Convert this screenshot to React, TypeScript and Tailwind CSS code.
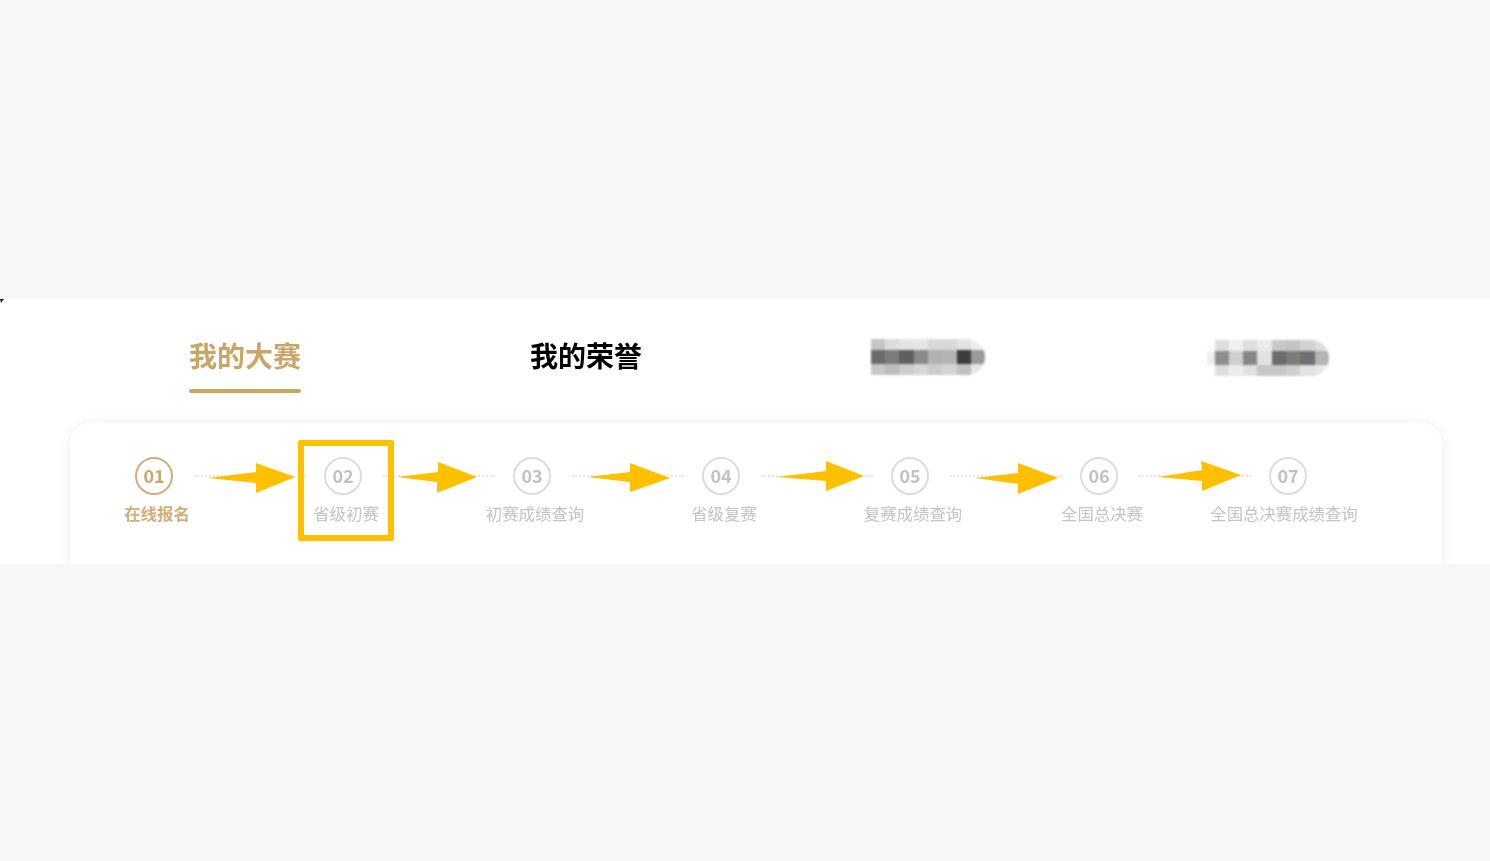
const font = { fontFamily: '"Noto Sans CJK SC", "Noto Sans", sans-serif' };

const tabs = ["我的大赛", "我的荣誉"];

// pixelated (censored) tab titles: top, middle and bottom rows of the mosaic
const mosaicA = [
  ["#c6c6c6", "#dcdcdc", "#e4e4e4", "#e6e6e6", "#d8d8d8", "#d8d8d8", "#e2e2e2", "#eeeeee"],
  ["#6c6c6a", "#7c7c7a", "#5f5f5e", "#8b8b8d", "#b2b2b2", "#b4b4b2", "#3c3c3a", "#9a9a9c"],
  ["#c8c8c8", "#bdbdbd", "#cccccc", "#d6d6d6", "#cbcbcb", "#d4d4d4", "#c0c0c0", "#e6e6e6"],
];
const mosaicB = [
  ["#ffffff", "#dedede", "#f0f0f0", "#dedede", "#ececec", "#c8c8c8", "#c4c4c4", "#d2d2d2", "#dcdcdc"],
  ["#f0f0f0", "#8e8e8e", "#cfcfcf", "#868686", "#e2e2e2", "#6c6c6c", "#7c7c78", "#707072", "#b4b4b6"],
  ["#ffffff", "#dfdfdf", "#ececec", "#e2e2e2", "#c6c6c6", "#c6c6c6", "#cfcfcf", "#e2e2e2", "#e8e8e8"],
];

const steps = [
  { no: "01", label: "在线报名" },
  { no: "02", label: "省级初赛" },
  { no: "03", label: "初赛成绩查询" },
  { no: "04", label: "省级复赛" },
  { no: "05", label: "复赛成绩查询" },
  { no: "06", label: "全国总决赛" },
  { no: "07", label: "全国总决赛成绩查询" },
];

const arrows = [
  "208,478 256,472 256,463 295,477 256,493 256,483",
  "397,477 438,472 438,462 477,477 437,493 437,482",
  "587,477 630,472 630,463 670,478 630,492 630,482",
  "776,477 826,471 826,461 864,476 826,491 826,481",
  "975,478 1018,473 1018,463 1058,478 1018,494 1018,484",
  "1158,477 1202,470 1201,461 1241,475 1202,491 1202,481",
];

function Mosaic({ rows, firstCell, className }: { rows: string[][]; firstCell: number; className: string }) {
  return (
    <div className={`flex flex-col overflow-hidden rounded-r-full blur-[0.8px] ${className}`}>
      {rows.map((row, i) => (
        <div key={i} className={`flex ${i === 1 ? "h-[14px]" : "h-[11px]"}`}>
          {row.map((color, j) => (
            <div
              key={j}
              className="h-full"
              style={{ backgroundColor: color, width: j === 0 ? firstCell : 14.3 }}
            />
          ))}
        </div>
      ))}
    </div>
  );
}

export default function App() {
  return (
    <div className="relative h-[861px] overflow-hidden bg-[#f7f7f7] pt-[299px]" style={font}>
      <div className="h-[265px] overflow-hidden bg-white">
        <div className="grid h-[124px] grid-cols-[repeat(4,341px)] pl-[74.5px]">
          {tabs.map((tab, i) => (
            <div key={tab} className="flex flex-col items-center pt-[36px]">
              <div
                className={`relative text-[28px] leading-[40px] font-bold blur-[0.75px] ${
                  i === 0 ? "text-[#c9a566]" : "text-[#000000]"
                }`}
              >
                {tab}
              </div>
              {i === 0 && <div className="mt-[14px] h-[4px] w-[112px] rounded-sm bg-[#cca65f] blur-[0.4px]" />}
            </div>
          ))}
          <div className="flex justify-center pt-[40px]">
            <Mosaic rows={mosaicA} firstCell={14.3} className="ml-[2px] h-[36px]" />
          </div>
          <div className="flex justify-center pt-[41px]">
            <Mosaic rows={mosaicB} firstCell={7.5} className="h-[36px]" />
          </div>
        </div>

        <div className="mr-[48px] ml-[70px] h-[200px] rounded-[20px] bg-white pt-[34px] pl-[9px] shadow-[0_0_12px_rgba(0,0,0,0.08)]">
          <div className="flex gap-[39px]">
            {steps.map((step, i) => (
              <div key={step.no} className="relative flex w-[150px] flex-col items-center">
                <div
                  className={`flex h-[38px] w-[38px] items-center justify-center rounded-full border-2 pb-[1px] text-[18px] font-bold blur-[0.75px] ${
                    i === 0 ? "border-[#d2ae7a] text-[#c9a772]" : "border-[#dcdcdc] text-[#c2c2c2]"
                  }`}
                >
                  {step.no}
                </div>
                {i < steps.length - 1 && (
                  <div className="absolute top-[18px] left-[115px] w-[112px] border-t-2 border-dotted border-[#e6e6e6] blur-[0.5px]" />
                )}
                <div
                  className={`mt-[6px] whitespace-nowrap text-[16.4px] leading-[24px] blur-[0.75px] ${
                    i === 0 ? "font-bold text-[#d6ad78]" : "text-[#c4c4c4]"
                  } ${i === 6 ? "mr-[8px]" : "ml-[6px]"}`}
                >
                  {step.label}
                </div>
              </div>
            ))}
          </div>
        </div>
      </div>

      {/* annotations drawn on top of the screenshot */}
      <svg className="absolute top-0 left-0" width="1490" height="861">
        <polygon points="0,299 4,299 1,303" fill="#222222" />
        {arrows.map((points) => (
          <polygon key={points} points={points} fill="#ffc000" />
        ))}
      </svg>
      <div className="absolute top-[440px] left-[298px] h-[101px] w-[96px] rounded-[2px] border-[6px] border-[#ffc000]" />
    </div>
  );
}
